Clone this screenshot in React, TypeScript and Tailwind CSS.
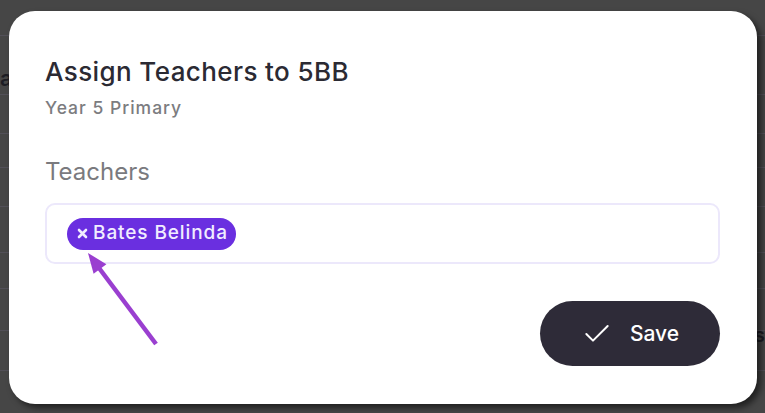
import { Check } from "lucide-react";

function Backdrop() {
  const lines = [35, 94, 133, 167, 206, 252, 288, 330, 370];
  return (
    <div className="absolute inset-0 bg-[#464646]">
      {lines.map((y) => (
        <div key={y} className="absolute left-0 right-0 h-px bg-[#525058]" style={{ top: y }} />
      ))}
      <span className="absolute left-0 top-[62px] text-[22px] font-semibold text-[#1d1d24]">as</span>
      <span className="absolute right-0 top-[320px] text-[20px] font-semibold text-[#1d1d24]">s</span>
    </div>
  );
}

function Arrow() {
  return (
    <svg className="absolute left-[71px] top-[236px]" width="90" height="110" viewBox="0 0 90 110">
      <line x1="76" y1="97" x2="16" y2="17" stroke="#9a3fd0" strokeWidth="4.5" />
      <polygon points="8,6 26.4,17.2 13.6,26.8" fill="#9a3fd0" />
    </svg>
  );
}

export default function App() {
  return (
    <div
      className="relative w-[765px] h-[413px] overflow-hidden"
      style={{ fontFamily: "Inter, 'Noto Sans', sans-serif" }}
    >
      <Backdrop />
      <div className="relative pl-[9px] pt-[11px]">
        <div className="relative w-[748px] h-[393px] bg-white rounded-[26px] shadow-[4px_4px_6px_rgba(0,0,0,0.55)] pl-[36px] pr-[37px] pt-[45px] flex flex-col">
          <h1 className="text-[26px] leading-[32px] tracking-[0.4px] font-medium text-[#2b2a33]">Assign Teachers to 5BB</h1>
          <p className="mt-[8px] text-[17.5px] leading-[24px] tracking-[1px] font-medium text-[#7c7c80]">Year 5 Primary</p>
          <label className="mt-[37px] text-[24px] leading-[30px] text-[#7a7a7e]">Teachers</label>
          <div className="mt-[16px] h-[61px] rounded-[10px] border-2 border-[#ece8fb] flex items-center pl-[20px]">
            <span className="flex items-center gap-[5px] h-[32px] rounded-full bg-[#6a2fe0] pl-[10px] pr-[8px] text-[19px] tracking-[0.9px] font-medium text-[#f1edff]">
              <svg width="11" height="11" viewBox="0 0 11 11">
                <path d="M2 2 L9 9 M9 2 L2 9" stroke="#f1edff" strokeWidth="2.6" strokeLinecap="round" />
              </svg>
              Bates Belinda
            </span>
          </div>
          <div className="mt-[37px] flex justify-end">
            <button className="w-[180px] h-[65px] rounded-full bg-[#2e2b38] flex items-center justify-center gap-[17px] text-white text-[21px] font-medium">
              <Check size={32} strokeWidth={1.5} />
              Save
            </button>
          </div>
          <Arrow />
        </div>
      </div>
    </div>
  );
}
